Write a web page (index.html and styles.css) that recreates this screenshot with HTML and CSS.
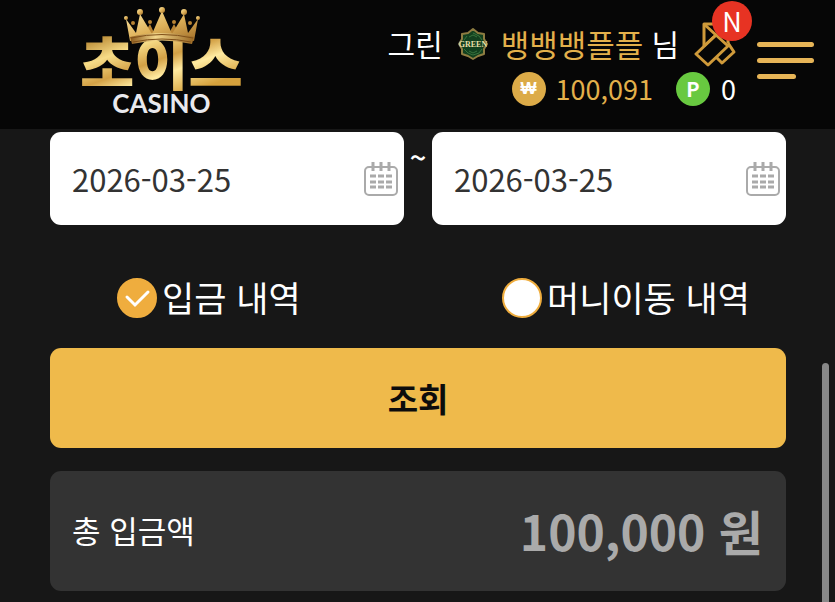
FILE: index.html
```html
<!DOCTYPE html>
<html lang="ko">
  <head>
    <meta charset="UTF-8">
    <meta name="viewport" content="width=device-width, initial-scale=1.0">
    <title>초이스 CASINO</title>
    <link rel="stylesheet" href="styles.css">
  </head>
  <body>
    <header class="header">
      <a href="#" class="logo">
        <svg class="logo-crown" viewBox="0 0 78 38" aria-hidden="true">
          <defs>
            <linearGradient id="gold" x1="0" y1="0" x2="1" y2="1">
              <stop offset="0" stop-color="#fbe6a2"/>
              <stop offset="0.5" stop-color="#dfb25a"/>
              <stop offset="1" stop-color="#a06c26"/>
            </linearGradient>
            <linearGradient id="band" x1="0" y1="0" x2="1" y2="0">
              <stop offset="0" stop-color="#8c5a1c"/>
              <stop offset="0.4" stop-color="#f3d78c"/>
              <stop offset="1" stop-color="#9a6823"/>
            </linearGradient>
          </defs>
          <g fill="#b98434">
            <path d="M19 30 L27 17 L33 30 Z M44 30 L51 17 L58 30 Z"/>
            <circle cx="27" cy="15" r="2"/>
            <circle cx="51" cy="15" r="2"/>
            <circle cx="10" cy="16" r="2"/>
            <circle cx="67" cy="16" r="2"/>
          </g>
          <g fill="url(#gold)">
            <path d="M7 34 L3 12 L13 26 L17 7 L29 27 L39 4 L49 27 L61 7 L65 26 L75 12 L71 34 Q39 26 7 34 Z"/>
            <circle cx="3" cy="11" r="2"/>
            <circle cx="17" cy="5" r="3"/>
            <circle cx="39" cy="3" r="3"/>
            <circle cx="61" cy="5" r="3"/>
            <circle cx="75" cy="11" r="2"/>
          </g>
          <path d="M7 30 Q39 22 71 30 L69 37 Q39 30 9 37 Z" fill="url(#band)"/>
          <path d="M8 31 Q39 24 70 31 M10 35 Q39 29 68 35" fill="none" stroke="#805019" stroke-width="1"/>
        </svg>
        <span class="logo-name">초이스</span>
        <span class="logo-sub">CASINO</span>
      </a>

      <div class="user">
        <div class="user-row">
          <span class="level">그린</span>
          <svg class="level-badge" viewBox="0 0 32 34" role="img" aria-label="GREEN">
            <path d="M16 2 L21 6 L27 7 L27 12 L30 17 L27 22 L27 27 L21 29 L16 32 L11 29 L5 27 L5 22 L2 17 L5 12 L5 7 L11 6 Z" fill="#12401f" stroke="#8d7c41" stroke-width="2" stroke-linejoin="round"/>
            <path d="M16 6 L22 9 L25 13 M10 9 L7 13 M7 22 L11 26 L16 28 L22 26 L25 22 M12 10 L16 8 L20 10 M12 24 L16 26 L20 24" fill="none" stroke="#38733c" stroke-width="1"/>
            <text class="badge-text" x="16" y="20" text-anchor="middle">GREEN</text>
          </svg>
          <span class="name">뱅뱅뱅플플</span>
          <span class="suffix">님</span>
          <a href="#" class="coupon" aria-label="쿠폰">
            <svg class="coupon-icon" viewBox="0 0 42 46" aria-hidden="true">
              <g fill="none" stroke="#cf9a3a" stroke-width="3" stroke-linejoin="round">
                <path d="M10 25 L10 3 L26 3 L34 12 L34 22"/>
                <path d="M11 4 L22 14 L10 25"/>
                <path d="M22 14 L34 25 L14 44 L2 33 Z"/>
                <path d="M34 22 L40 31 L28 42 L22 36"/>
              </g>
            </svg>
            <span class="count">N</span>
          </a>
        </div>
        <div class="user-row">
          <span class="coin coin-won">₩</span>
          <span class="money">100,091</span>
          <span class="coin coin-point">P</span>
          <span class="point">0</span>
        </div>
      </div>

      <button type="button" class="menu" aria-label="메뉴">
        <span class="bar"></span>
        <span class="bar"></span>
        <span class="bar bar-short"></span>
      </button>
    </header>

    <main class="main">
      <form class="search">
        <div class="dates">
          <label class="date">
            <input type="text" class="date-input" value="2026-03-25" aria-label="시작일">
            <svg class="calendar" viewBox="0 0 34 34" aria-hidden="true">
              <rect x="1" y="5" width="32" height="28" rx="4" fill="none" stroke="#aaa" stroke-width="2"/>
              <path d="M9 0 V9 M17 0 V9 M25 0 V9" stroke="#aaa" stroke-width="3"/>
              <path d="M6 14 H28 M6 20 H28 M6 25 H28" stroke="#aaa" stroke-width="3" stroke-dasharray="6 2"/>
            </svg>
          </label>
          <span class="tilde">~</span>
          <label class="date">
            <input type="text" class="date-input" value="2026-03-25" aria-label="종료일">
            <svg class="calendar" viewBox="0 0 34 34" aria-hidden="true">
              <rect x="1" y="5" width="32" height="28" rx="4" fill="none" stroke="#aaa" stroke-width="2"/>
              <path d="M9 0 V9 M17 0 V9 M25 0 V9" stroke="#aaa" stroke-width="3"/>
              <path d="M6 14 H28 M6 20 H28 M6 25 H28" stroke="#aaa" stroke-width="3" stroke-dasharray="6 2"/>
            </svg>
          </label>
        </div>

        <div class="types">
          <label class="type">
            <span class="radio">
              <input type="radio" class="radio-input" name="type" checked>
              <svg class="check" viewBox="0 0 40 40" aria-hidden="true">
                <path d="M10 19 L18 27 L31 14" fill="none" stroke="#fff" stroke-width="3" stroke-linecap="round"/>
              </svg>
            </span>
            <span class="type-name">입금 내역</span>
          </label>
          <label class="type">
            <span class="radio">
              <input type="radio" class="radio-input" name="type">
            </span>
            <span class="type-name">머니이동 내역</span>
          </label>
        </div>

        <button type="button" class="submit">조회</button>
      </form>

      <section class="total">
        <span class="total-label">총 입금액</span>
        <strong class="total-value">100,000 원</strong>
      </section>
    </main>
    <div class="scroll-thumb"></div>
  </body>
</html>
```

FILE: styles.css
```css
* {
  box-sizing: border-box;
}

body {
  margin: 0;
  min-height: 100vh;
  overflow: hidden;
  position: relative;
  background-color: #171717;
  color: #fff;
  font-family: "Noto Sans CJK KR", sans-serif;
}

button,
input {
  font-family: inherit;
}

/* Header */
.header {
  display: flex;
  align-items: flex-start;
  height: 129px;
  padding: 0 21px 0 80px;
  background-color: #060606;
}

.logo {
  display: flex;
  flex-direction: column;
  align-items: center;
  position: relative;
  padding-top: 31px;
  text-decoration: none;
}

.logo-crown {
  position: absolute;
  top: 7px;
  left: 43px;
  width: 78px;
  height: 38px;
}

.logo-name {
  font-size: 59px;
  font-weight: 900;
  line-height: 60px;
  color: transparent;
  background-image: linear-gradient(160deg, #b98a35 10%, #f7dc87 30%, #d3a146 48%, #ffeaa0 62%, #d5a13c 85%);
  -webkit-background-clip: text;
  background-clip: text;
}

.logo-sub {
  font-family: Lato, sans-serif;
  font-size: 26px;
  font-weight: 700;
  line-height: 24px;
  color: #e9e9ee;
}

.user {
  display: flex;
  flex-direction: column;
  align-items: flex-end;
  margin-left: auto;
  padding-top: 21px;
  font-size: 30px;
}

.user-row {
  display: flex;
  align-items: center;
  height: 45px;
  line-height: 45px;
}

.level-badge {
  width: 32px;
  height: 34px;
  margin: 0 12px 0 14px;
}

.badge-text {
  font-family: "Liberation Serif", serif;
  font-size: 8px;
  font-weight: 700;
  fill: #e8dfa8;
}

.name {
  color: #e3b04b;
  font-size: 31px;
}

.suffix {
  margin: 0 15px 0 8px;
}

.coupon {
  display: flex;
  position: relative;
  color: #fff;
  text-decoration: none;
}

.coupon-icon {
  width: 42px;
  height: 46px;
}

.count {
  position: absolute;
  top: -20px;
  right: -16px;
  width: 40px;
  height: 40px;
  border-radius: 50%;
  background-color: #e73323;
  font-size: 27px;
  line-height: 40px;
  text-align: center;
}

.coin {
  width: 34px;
  height: 34px;
  border-radius: 50%;
  font-size: 20px;
  font-weight: 700;
  line-height: 34px;
  text-align: center;
}

.coin-won {
  background-color: #dcab48;
  font-family: "Liberation Sans", sans-serif;
  font-size: 17px;
}

.coin-point {
  background-color: #68c940;
}

.money {
  margin: 0 23px 0 10px;
  color: #e3b04b;
  font-size: 27px;
}

.point {
  margin-left: 11px;
  font-size: 27px;
}

.menu {
  display: flex;
  flex-direction: column;
  gap: 11px;
  width: 57px;
  margin: 42px 0 0 21px;
  padding: 0;
  border: 0;
  background: none;
}

.bar {
  width: 100%;
  height: 5px;
  border-radius: 3px;
  background-color: #e6b457;
}

.bar-short {
  width: 39px;
}

/* Search form */
.main {
  padding: 3px 49px 11px 50px;
}

.dates {
  display: flex;
}

.date {
  display: flex;
  flex: 1;
  align-items: center;
  min-width: 0;
  height: 93px;
  padding: 0 6px 0 22px;
  border-radius: 11px;
  background-color: #fff;
}

.date-input {
  flex: 1;
  min-width: 0;
  padding: 0;
  border: 0;
  background: none;
  color: #333;
  font-size: 31px;
}

.calendar {
  width: 34px;
  height: 34px;
}

.tilde {
  width: 28px;
  font-size: 29px;
  font-weight: 500;
  line-height: 48px;
  text-align: center;
}

.types {
  display: flex;
  justify-content: space-between;
  padding: 46px 36px 23px 67px;
}

.type {
  display: flex;
  align-items: center;
  gap: 5px;
  height: 54px;
  font-size: 35px;
}

.type-name {
  padding-bottom: 3px;
  line-height: 51px;
}

.radio {
  display: grid;
}

.radio-input {
  grid-area: 1 / 1;
  appearance: none;
  width: 40px;
  height: 40px;
  margin: 0;
  border: 2px solid #efad3e;
  border-radius: 50%;
  background-color: #fff;
}

.radio-input:checked {
  background-color: #efad3e;
}

.check {
  grid-area: 1 / 1;
  width: 40px;
  height: 40px;
}

.submit {
  display: block;
  width: 100%;
  height: 100px;
  padding: 0;
  border: 0;
  border-radius: 11px;
  background-color: #efba4b;
  color: #0c0c0c;
  font-size: 33px;
  font-weight: 700;
}

/* Total */
.total {
  display: flex;
  align-items: center;
  justify-content: space-between;
  height: 120px;
  margin-top: 23px;
  padding: 0 23px 3px 22px;
  border-radius: 11px;
  background-color: #333;
}

.total-label {
  font-size: 31px;
}

.total-value {
  color: #aaa;
  font-size: 48px;
  font-weight: 700;
}

/* Scroll thumb over the right edge */
.scroll-thumb {
  position: absolute;
  top: 363px;
  right: 6px;
  bottom: -6px;
  width: 7px;
  border-radius: 4px;
  background-color: #888;
}
```
